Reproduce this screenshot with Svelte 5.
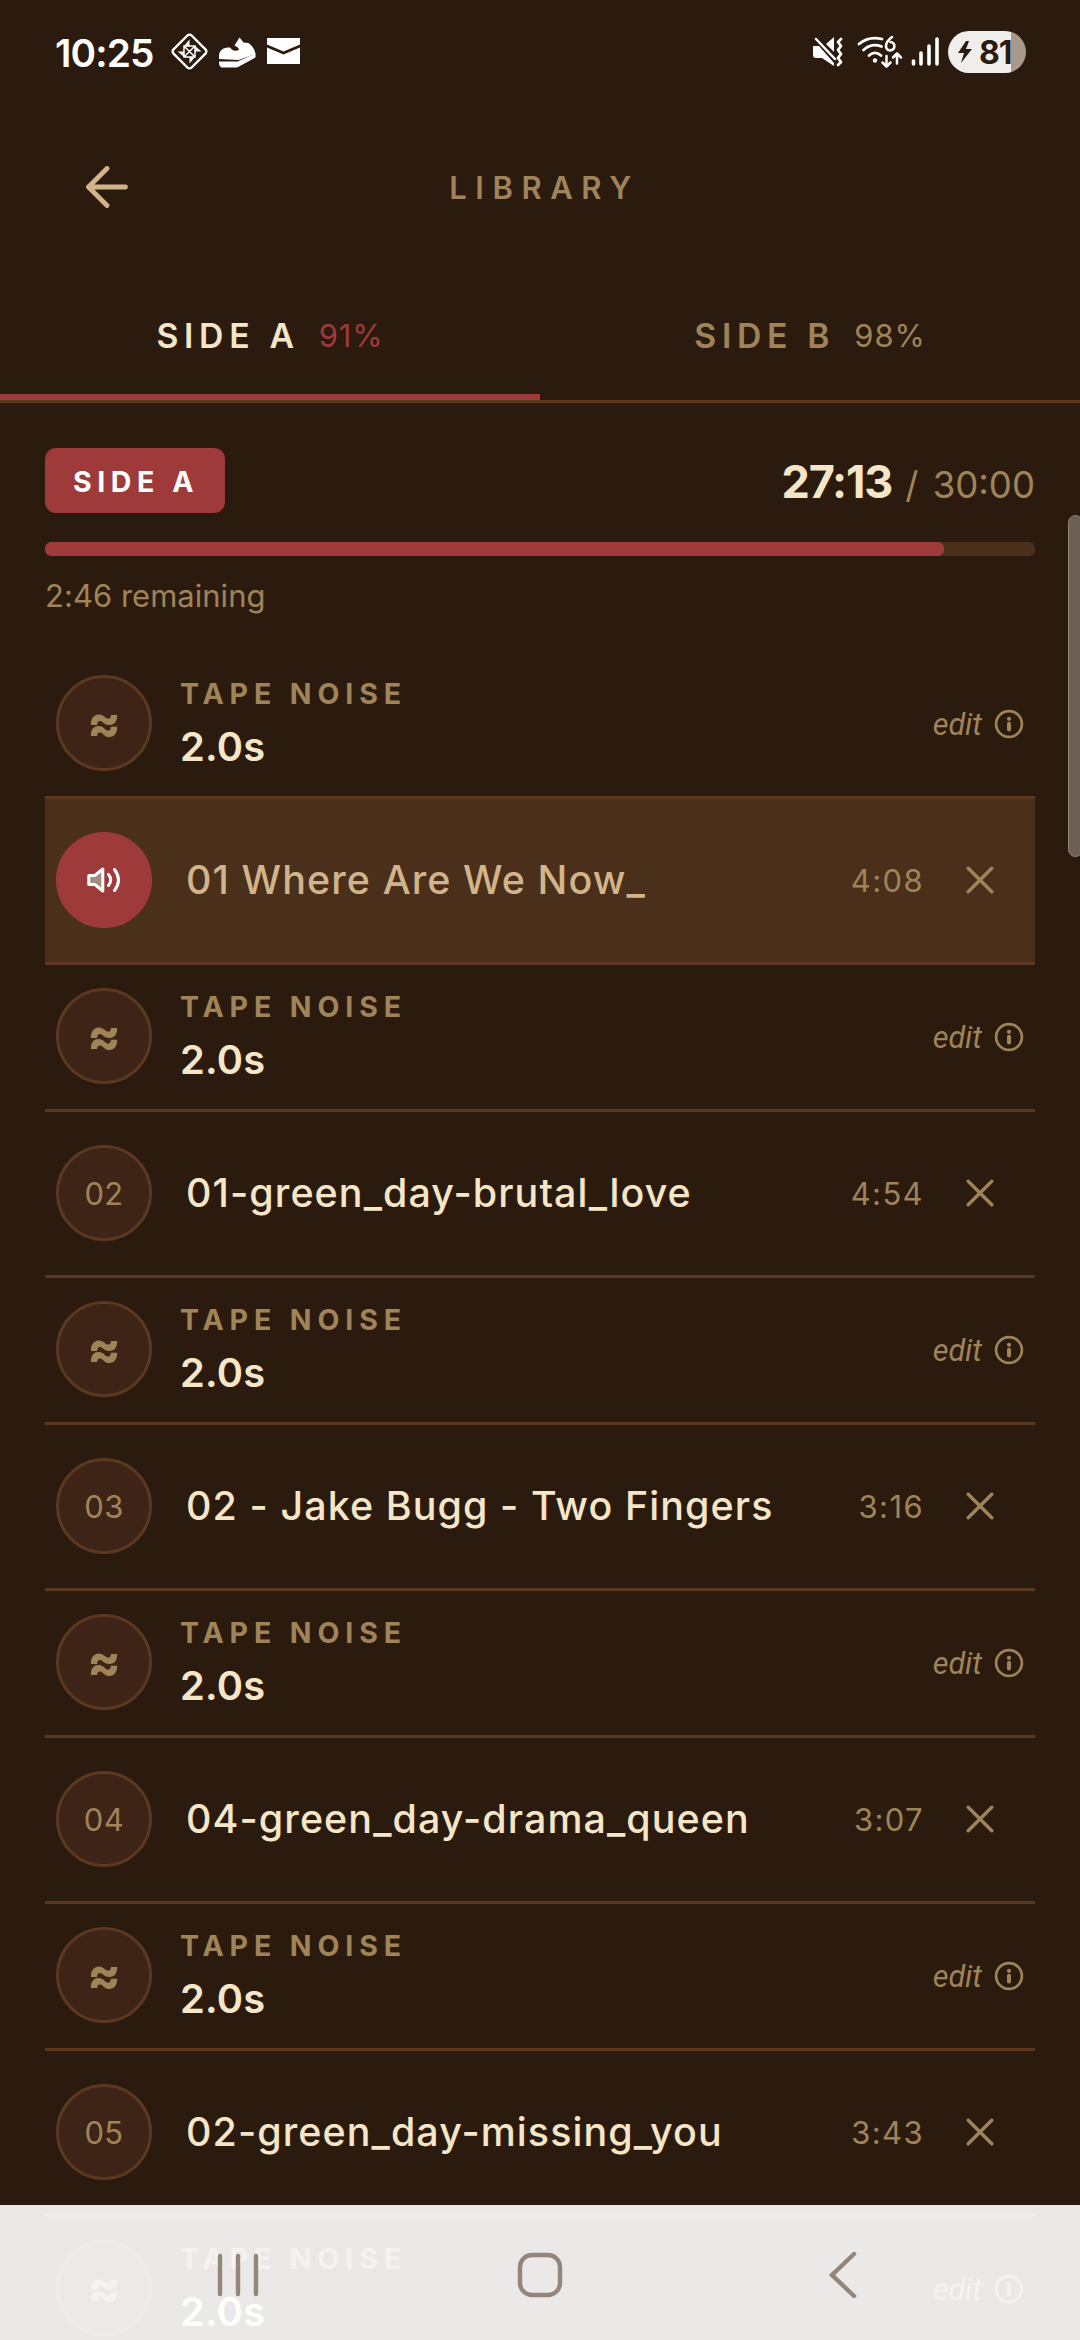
<script>
  const tracks = [
    { n: '01', title: '01 Where Are We Now_', time: '4:08', active: true },
    { n: '02', title: '01-green_day-brutal_love', time: '4:54' },
    { n: '03', title: '02 - Jake Bugg - Two Fingers', time: '3:16' },
    { n: '04', title: '04-green_day-drama_queen', time: '3:07' },
    { n: '05', title: '02-green_day-missing_you', time: '3:43' }
  ];
  const used = 90.8;
</script>

{#snippet noise()}
  <div class="row noise">
    <div class="disc wave">≈</div>
    <div class="noise-text">
      <span class="label">TAPE NOISE</span>
      <span class="secs">2.0s</span>
    </div>
    <span class="edit">edit</span>
    <svg class="info" viewBox="0 0 30 30" width="30" height="30">
      <circle cx="15" cy="15" r="12.9" fill="none" stroke="currentColor" stroke-width="2.7" />
      <circle cx="15" cy="9.8" r="2.1" fill="currentColor" />
      <path d="M15 14.8v5.6" stroke="currentColor" stroke-width="4" stroke-linecap="round" />
    </svg>
  </div>
{/snippet}

<div class="screen">
  <div class="status">
    <span class="clock">10:25</span>
    <svg class="s-left" viewBox="0 0 132 40" width="132" height="40" fill="#fff">
      <rect x="6.7" y="6.7" width="25.6" height="25.6" rx="3" transform="rotate(45 19.5 19.500)" fill="none" stroke="#fff" stroke-width="2.4" />
      <path d="M14 14h11v11H14zM14 14l11 11M25 14L14 25" fill="none" stroke="#fff" stroke-width="1.500" />
      <path d="M19.500 7.500V14H14zM31.500 19.500H25V14zM19.500 31.500V25H25zM7.500 19.500H14V25z" />
      <path d="M49 27v-3c0-5 4-8.500 9-8.500h2c2 3 5 4 9 2.500 0-2-2-3-4.500-4.500L69.500 5.500l4 5 5 .500c4 3 6 6 7 11l-17 6z" />
      <path d="M49 29.500h18.500l18-8v4L69 34.500c-1 .500-2 1-3 1H53c-3 0-4-2-4-6z" />
      <path d="M97 6h33v6.500l-16.500 7L97 12.500z" />
      <path d="M97 15.500l16.500 7 16.500-7V32H97z" />
    </svg>
    <svg class="s-right" viewBox="0 0 128 40" width="128" height="40" fill="#fff">
      <path d="M1 14h6l15 17v3L10 26H4c-2 0-3-1-3-3zM14 12l8-7v15z" />
      <path d="M4 7l19 20" stroke="#fff" stroke-width="2.500" stroke-linecap="round" />
      <path d="M29 7l-3 3 3 4-3 4 3 4-3 4 3 4-3 3" fill="none" stroke="#fff" stroke-width="2.800" stroke-linejoin="round" stroke-linecap="round" />
      <path d="M47 12c7-6 15-7 23-5M51.500 18c5-5 12-6 18-3.500M57 23.500c4-3.500 8-3.500 12 0" fill="none" stroke="#fff" stroke-width="2.800" stroke-linecap="round" />
      <circle cx="63" cy="28.500" r="2.200" />
      <path d="M80 5c-4 3-6 6-6 9a4.200 4.200 0 1 0 4.500-4" fill="none" stroke="#fff" stroke-width="2.600" stroke-linecap="round" />
      <path d="M74.500 24v10M70.500 30.500l4 4 4-4M85 31.500V22M81 25.500l4-4 4 4" fill="none" stroke="#fff" stroke-width="2.500" stroke-linecap="round" stroke-linejoin="round" />
      <path d="M101.500 29v3M109 21v11M117 14v18M125 7v25" fill="none" stroke="#fff" stroke-width="3.600" stroke-linecap="round" />
    </svg>
    <div class="battery">
      <svg viewBox="0 0 14 22" width="14" height="22"><path d="M8 0L0 12h6L3 22 14 8H8l3-8z" fill="#2b1b0f" /></svg>
      <span>81</span>
    </div>
  </div>

  <header>
    <svg class="back" viewBox="0 0 42 42" width="42" height="42" fill="none" stroke="#d2b48c" stroke-width="4.800" stroke-linecap="round" stroke-linejoin="round">
      <path d="M39.500 21H2.500M21 2.500L2.500 21 21 39.500" />
    </svg>
    <h1>LIBRARY</h1>
  </header>

  <nav class="tabs">
    <div class="tab on"><span>SIDE A</span><small>91%</small></div>
    <div class="tab"><span>SIDE B</span><small>98%</small></div>
  </nav>

  <section class="summary">
    <div class="top">
      <div class="badge">SIDE A</div>
      <div class="times"><b>27:13</b> <span>/ 30:00</span></div>
    </div>
    <div class="bar"><div class="fill" style:width="{used}%"></div></div>
    <p>2:46 remaining</p>
  </section>

  <main>
    {#each tracks as t}
      {@render noise()}
      <div class="row track" class:active={t.active}>
        <div class="disc">
          {#if t.active}
            <svg viewBox="0 0 34 26" width="34" height="26" fill="none" stroke="#fff" stroke-width="3" stroke-linejoin="round" stroke-linecap="round">
              <path d="M1.800 8.500h6l8-6.500v22l-8-6.500h-6z" fill="#a08c7e" />
              <path d="M21.500 7.500q4.500 5.500 0 11M27.500 2.500q8 10.500 0 21" />
            </svg>
          {:else}{t.n}{/if}
        </div>
        <span class="title">{t.title}</span>
        <span class="time">{t.time}</span>
        <svg class="x" viewBox="0 0 28 28" width="28" height="28" fill="none" stroke="currentColor" stroke-width="3.400" stroke-linecap="round">
          <path d="M2.200 2.200l23.600 23.600M25.800 2.200L2.200 25.800" />
        </svg>
      </div>
    {/each}
    {@render noise()}
  </main>

  <div class="scroll"></div>

  <div class="sysnav">
    <svg viewBox="0 0 44 48" width="44" height="48"><path d="M4 5v38M22 5v38M40 5v38" stroke="#93877b" stroke-width="4.400" stroke-linecap="round" /></svg>
    <svg class="home" viewBox="0 0 48 48" width="48" height="48"><rect x="4" y="4" width="40" height="40" rx="12" fill="none" stroke="#93877b" stroke-width="4.400" /></svg>
    <svg viewBox="0 0 30 48" width="30" height="48"><path d="M26 3L4 24l22 21" fill="none" stroke="#93877b" stroke-width="4.400" stroke-linecap="round" /></svg>
  </div>
</div>

<style>
  :global(body) { background: #2b1b0f; overflow: hidden; }
  .screen {
    position: relative;
    width: 1080px;
    height: 2340px;
    overflow: hidden;
    background: #2b1b0f;
    color: #f5e6c8;
    font-family: Inter, "Liberation Sans", sans-serif;
    display: flex;
    flex-direction: column;
  }
  .screen > * { flex-shrink: 0; }
  svg { display: block; flex: none; }

  .status {
    height: 104px;
    box-sizing: border-box;
    padding: 0 54px 0 55px;
    display: flex;
    align-items: center;
    color: #fff;
  }
  .clock { font-size: 38.800px; font-weight: 600; width: 115px; letter-spacing: -0.900px; }
  .s-right { margin-left: auto; margin-right: 8px; }
  .battery {
    width: 78px;
    height: 42px;
    border-radius: 21px;
    background: linear-gradient(90deg, #f0eeec 0 63px, #a8998b 63px);
    color: #2b1b0f;
    display: flex;
    align-items: center;
    padding-left: 10px;
    gap: 7px;
    box-sizing: border-box;
    font-size: 32px;
    font-weight: 700;
    letter-spacing: -1px;
  }

  header {
    height: 166px;
    padding: 0 86px;
    display: grid;
    grid-template-columns: 42px 1fr 42px;
    align-items: center;
  }
  h1 {
    margin: 0;
    padding-left: 9px;
    font-size: 30.940px;
    font-weight: 600;
    letter-spacing: 8.600px;
    text-align: center;
    color: #a08459;
  }

  .tabs {
    height: 130px;
    display: grid;
    grid-template-columns: 1fr 1fr;
    border-bottom: 3px solid #5c3820;
  }
  .tab {
    display: flex;
    justify-content: center;
    align-items: center;
    gap: 19px;
    padding-top: 7px;
    font-size: 33.750px;
    font-weight: 600;
    letter-spacing: 5.700px;
    color: #a08459;
    border-bottom: 6px solid transparent;
  }
  .tab small { font-size: 30.940px; font-weight: 400; letter-spacing: 0.900px; }
  .tab.on { color: #f5e6c8; border-color: #9e3a3a; }
  .tab.on small { color: #9e3a3a; }

  .summary { padding: 45px 45px 0; }
  .top { display: flex; justify-content: space-between; align-items: center; height: 65px; }
  .badge {
    height: 65px;
    width: 180px;
    box-sizing: border-box;
    padding-left: 28px;
    border-radius: 11px;
    background: #9e3a3a;
    color: #fff;
    font-size: 28.500px;
    font-weight: 700;
    letter-spacing: 5.600px;
    line-height: 67px;
  }
  .times { font-size: 36.560px; color: #a08459; white-space: nowrap; padding-top: 2px; }
  .times b { font-size: 45px; font-weight: 700; letter-spacing: -1.200px; margin-right: 3px; color: #f5e6c8; }
  .times span { word-spacing: 4px; }
  .bar { margin-top: 29px; height: 14px; border-radius: 6px; background: #4a2f1a; overflow: hidden; }
  .fill { height: 100%; border-radius: 6px; background: #9e3a3a; }
  p { margin: 17px 0 0; font-size: 30.940px; line-height: 46px; color: #a08459; letter-spacing: 0.050px; }

  main { padding: 33px 45px 0; }
  .row { display: flex; align-items: center; padding: 0 11px; box-sizing: border-box; }
  .row.noise { height: 147px; border-bottom: 3px solid #5c3820; padding-bottom: 2px; }
  .row.track { height: 166px; border-bottom: 3px solid #5c3820; padding-bottom: 1px; }
  .row.active { background: #4a2f1a; }
  .disc {
    flex: none;
    width: 96px;
    height: 96px;
    box-sizing: border-box;
    border: 3px solid #5c3820;
    border-radius: 50%;
    background: #3d2417;
    color: #a08459;
    display: flex;
    align-items: center;
    justify-content: center;
    font-size: 30.940px;
    letter-spacing: 0.400px;
  }
  .wave { font-size: 49px; line-height: 50px; font-weight: 800; letter-spacing: 0; padding-bottom: 1px; }
  .active .disc { background: #9e3a3a; border-color: #9e3a3a; }
  .noise-text { margin-left: 28px; flex: 1; display: flex; flex-direction: column; padding-top: 5px; }
  .label { font-size: 28.500px; font-weight: 700; letter-spacing: 5.900px; line-height: 42px; color: #a08459; }
  .secs { font-size: 39.800px; font-weight: 600; line-height: 64px; letter-spacing: 0.200px; }
  .edit { font-size: 30.500px; font-style: italic; color: #a08459; font-family: Roboto, sans-serif; padding-top: 3px; }
  .info { color: #a08459; margin-left: 12px; margin-top: 2px; }
  .title { margin-left: 34px; flex: 1; font-size: 39.400px; font-weight: 500; letter-spacing: 1.100px; white-space: nowrap; }
  .active .title { color: #d2b48c; }
  .time { font-size: 30.940px; letter-spacing: 1.400px; color: #a08459; }
  .x { color: #a08459; margin: 0 30px 0 42px; }

  .scroll {
    position: absolute;
    right: -3px;
    top: 515px;
    width: 15px;
    height: 342px;
    box-sizing: border-box;
    border: 1.500px solid #8f857b;
    border-radius: 12px;
    background: #6c5f54;
  }
  .sysnav {
    position: absolute;
    left: 0;
    right: 0;
    bottom: 0;
    height: 135px;
    box-sizing: border-box;
    padding: 5px 222px 0 216px;
    background: rgba(255, 255, 255, 0.905);
    display: flex;
    align-items: center;
    justify-content: space-between;
  }
  .home { margin-right: 8px; }
</style>
